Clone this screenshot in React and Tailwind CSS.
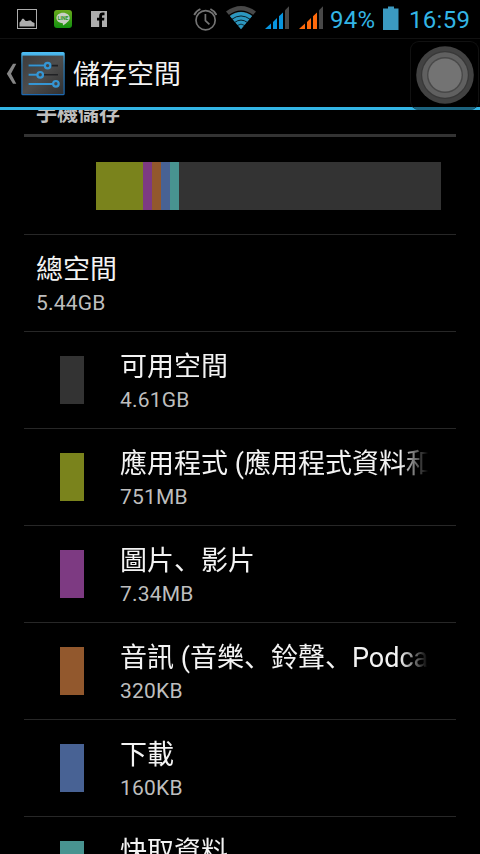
import React from 'react';

const categorias = [
  { nombre: '可用空間', valor: '4.61GB', color: 'bg-[#333333]' },
  { nombre: '應用程式 (應用程式資料和媒體內容)', valor: '751MB', color: 'bg-[#7a831c]' },
  { nombre: '圖片、影片', valor: '7.34MB', color: 'bg-[#7d3a82]' },
  { nombre: '音訊 (音樂、鈴聲、Podcast 等)', valor: '320KB', color: 'bg-[#92582d]' },
  { nombre: '下載', valor: '160KB', color: 'bg-[#486294]' },
  { nombre: '快取資料', valor: '10.02MB', color: 'bg-[#489390]' },
];

const segmentos = [
  'w-[47px] bg-[#7a831c]',
  'w-[9px] bg-[#7d3a82]',
  'w-[9px] bg-[#92582d]',
  'w-[9px] bg-[#486294]',
  'w-[9px] bg-[#489390]',
  'flex-1 bg-[#333333]',
];

function Senal({ color }) {
  return (
    <svg width="25" height="24" viewBox="0 0 25 24" className="shrink-0">
      <path d="M0 23 L6 17.5 V23 Z" fill={color} />
      <path d="M8 16 L12 12 V23 H8 Z" fill={color} />
      <path d="M14 10.3 L18 6.5 V23 H14 Z" fill={color} />
      <path d="M20 4.2 L24 0.2 V23 H20 Z" fill="#484848" />
    </svg>
  );
}

function BarraEstado() {
  return (
    <div className="flex h-[38px] shrink-0 items-start">
      <svg width="20" height="20" viewBox="0 0 20 20" className="mt-[9px] ml-[17px]">
        <rect x="0.5" y="0.5" width="19" height="19" fill="none" stroke="#adadad" />
        <path d="M2.5 17.5 V13.5 L4 12 L5.2 9.8 H6.6 L8.6 12 H10.5 L12 11.4 H13.8 L15.2 13 L17.5 14 V17.5 Z" fill="#adadad" />
      </svg>
      <svg width="18" height="18" viewBox="0 0 18 18" className="mt-[10px] ml-[17px]">
        <defs>
          <linearGradient id="verde" x1="0" y1="0" x2="0" y2="1">
            <stop offset="0" stopColor="#69a91c" />
            <stop offset="1" stopColor="#12900f" />
          </linearGradient>
        </defs>
        <rect width="18" height="18" rx="3" fill="url(#verde)" />
        <path d="M9 2.7 C12.8 2.7 15.7 5 15.7 8 C15.7 11 12 13.4 9 15.6 L8.8 13.2 C5.2 13.1 2.4 10.9 2.4 8 C2.4 5 5.3 2.7 9 2.7 Z" fill="#c9cfc5" />
        <text x="9" y="10.2" textAnchor="middle" className="font-['Roboto',sans-serif] text-[5px] font-bold" fill="#25931a">LINE</text>
      </svg>
      <svg width="16" height="16" viewBox="0 0 16 16" className="mt-[11px] ml-[19px]">
        <rect width="16" height="16" fill="#adadad" />
        <path d="M8.2 16 V9.5 H6 V6.7 H8.2 V5 C8.2 2.7 9.5 1.6 11.5 1.6 H13.5 V4.3 H12.1 C11.3 4.3 11 4.7 11 5.4 V6.7 H13.4 L13.1 9.5 H11 V16 Z" fill="#000" />
      </svg>

      <svg width="24" height="24" viewBox="0 0 24 24" fill="none" stroke="#747474" className="mt-[7px] ml-[86px]">
        <circle cx="12.6" cy="13.2" r="9.6" strokeWidth="1.7" />
        <path d="M12.4 7 V13.6 L16.4 17.4" strokeWidth="1.7" />
        <path d="M1.2 8 Q3 4 7.4 2 M17.4 2 Q21.6 4 23.4 8" strokeWidth="1.9" />
      </svg>
      <svg width="30" height="24" viewBox="0 0 30 24" className="mt-[6px] ml-[9px]">
        <path d="M0 5.6 Q15 -5.4 30 5.6 L15 23 Z" fill="#484848" />
        <path d="M3.9 10 Q15 1.8 26.1 10 L15 23.2 Z" fill="#2b97c0" />
        <g fill="none" stroke="#000">
          <path d="M2.6 9.8 Q15 0.6 27.4 9.8" strokeWidth="1.2" />
          <path d="M5.6 13.4 Q15 6.5 24.4 13.4" strokeWidth="0.8" />
          <path d="M8.4 16.6 Q15 11.6 21.6 16.6" strokeWidth="0.8" />
          <path d="M11 19.6 Q15 16.6 19 19.6" strokeWidth="0.7" />
        </g>
      </svg>
      <div className="mt-[6px] ml-[9px] flex gap-[9px]">
        <Senal color="#0895df" />
        <Senal color="#ff6a0c" />
      </div>
      <span className="ml-[6px] w-[46px] text-[24px] leading-[40px] tracking-[0.3px] whitespace-nowrap text-[#33b5e5]">94%</span>
      <svg width="16" height="24" viewBox="0 0 16 24" className="mt-[6px] ml-[7px]">
        <path d="M5 0.5 H11 V2.5 H15.5 V24 H0 V2.5 H5 Z" fill="#3b9ac1" />
      </svg>
      <span className="ml-[10px] text-[24px] leading-[40px] tracking-[0.3px] whitespace-nowrap text-[#33b5e5]">16:59</span>
    </div>
  );
}

function IconoAjustes() {
  return (
    <svg width="44" height="44" viewBox="0 0 44 44" className="mt-[2px] ml-[4px]">
      <defs>
        <linearGradient id="borde" x1="0" y1="0" x2="0" y2="1">
          <stop offset="0" stopColor="#4fc0f5" />
          <stop offset="0.3" stopColor="#3184bd" />
          <stop offset="1" stopColor="#1c68b0" />
        </linearGradient>
        <linearGradient id="panel" x1="0" y1="0" x2="1" y2="1">
          <stop offset="0" stopColor="#3c3c3c" />
          <stop offset="0.5" stopColor="#4d4d4d" />
          <stop offset="1" stopColor="#303030" />
        </linearGradient>
      </defs>
      <rect x="0.3" y="0" width="43.4" height="43.2" rx="1.5" fill="url(#borde)" />
      <rect x="1.5" y="3.6" width="41" height="38.4" fill="url(#panel)" />
      <path d="M7.5 13.6 H37 M7.5 22.8 H37 M7.5 32 H37" stroke="#202124" strokeWidth="1.6" />
      <path d="M7.5 13.6 H24 M7.5 22.8 H16 M7.5 32 H32" stroke="#3596d4" strokeWidth="2" />
      <g fill="#464646" stroke="#3596d4" strokeWidth="2.2">
        <circle cx="26.6" cy="13.6" r="2.8" />
        <circle cx="19.2" cy="22.8" r="2.8" />
        <circle cx="34.9" cy="31.8" r="2.8" />
      </g>
    </svg>
  );
}

function BotonFlotante() {
  return (
    <div className="absolute top-[41px] left-[410px] flex h-[69px] w-[69px] justify-center rounded-[9px] border border-b-0 border-[#111111] bg-black/45 pt-[4px]">
      <svg width="58" height="58" viewBox="0 0 58 58">
        <circle cx="29" cy="29" r="28.8" fill="#424242" />
        <circle cx="29" cy="29" r="24" fill="#383838" />
        <circle cx="29" cy="29" r="22.8" fill="#606060" />
        <circle cx="29" cy="29" r="18" fill="#484848" />
        <circle cx="29" cy="29" r="16.6" fill="#737373" />
      </svg>
    </div>
  );
}

export default function App() {
  return (
    <div className="relative flex h-[854px] w-[480px] flex-col overflow-hidden bg-black font-['Roboto','Noto_Sans_CJK_SC',sans-serif] text-[#f3f3f3]">
      <BarraEstado />

      <header className="flex h-[72px] shrink-0 items-center border-t border-b-3 border-t-[#111111] border-b-[#33b5e5]">
        <svg width="11" height="22" viewBox="0 0 11 22" className="mt-[2px] ml-[6px]">
          <path d="M7 0.8 H10.3 L5 10.7 L10.3 20.8 H7 L0.8 10.7 Z" fill="#858585" />
        </svg>
        <IconoAjustes />
        <h1 className="mt-[3px] ml-[8px] text-[27px] leading-[40px]">儲存空間</h1>
      </header>

      <main className="flex flex-1 flex-col overflow-hidden px-[24px]">
        <h2 className="-mt-[12px] h-[39px] shrink-0 border-b-3 border-[#333333] pl-[12px] text-[21px] leading-[30px] font-bold text-[#bebebe]">
          手機儲存
        </h2>
        <div className="flex h-[98px] shrink-0 items-center border-b border-[#272727] pr-[15px] pl-[72px]">
          <div className="flex h-[48px] flex-1">
            {segmentos.map((clase, idx) => (
              <div key={idx} className={clase} />
            ))}
          </div>
        </div>
        <div className="h-[97px] shrink-0 border-b border-[#272727] pt-[18px] pl-[12px]">
          <p className="text-[27px] leading-[34px]">總空間</p>
          <p className="text-[21px] leading-[32px] tracking-[0.2px] text-[#bebebe]">5.44GB</p>
        </div>
        {categorias.map((c) => (
          <div key={c.nombre} className="flex h-[97px] shrink-0 border-b border-[#272727] pr-[28px] pl-[36px]">
            <div className={`mt-[24px] h-[48px] w-[24px] shrink-0 ${c.color}`} />
            <div className="ml-[36px] min-w-0 flex-1 pt-[18px]">
              <p className="overflow-hidden mask-r-from-[calc(100%-28px)] text-[27px] leading-[34px] whitespace-nowrap">
                {c.nombre}
              </p>
              <p className="text-[21px] leading-[32px] tracking-[0.2px] text-[#bebebe]">{c.valor}</p>
            </div>
          </div>
        ))}
      </main>

      <BotonFlotante />
    </div>
  );
}
